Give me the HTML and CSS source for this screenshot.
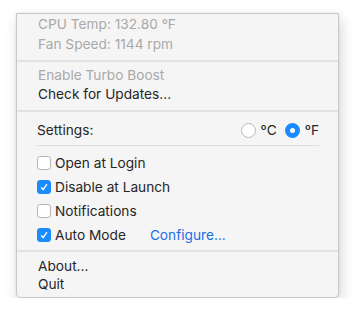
FILE: index.html
```html
<!DOCTYPE html>
<html lang="en">
<head>
  <meta charset="UTF-8" />
  <title>Fan Control Menu</title>
  <link rel="stylesheet" href="styles.css">
</head>
<body>
  <div class="menu">
    <div class="group status">
      <div class="item disabled">CPU Temp: 132.80 ºF</div>
      <div class="item disabled">Fan Speed: 1144 rpm</div>
    </div>
    <hr class="sep">
    <div class="group actions">
      <div class="item disabled">Enable Turbo Boost</div>
      <div class="item">Check for Updates...</div>
    </div>
    <hr class="sep">
    <div class="settings">
      <div class="settings-head">
        <span>Settings:</span>
        <div class="units">
          <label class="radio"><span class="dot"></span>ºC</label>
          <label class="radio on"><span class="dot"></span>ºF</label>
        </div>
      </div>
      <div class="inner-sep"></div>
      <label class="check-row"><span class="box"></span>Open at Login</label>
      <label class="check-row"><span class="box on"><svg viewBox="0 0 14 14"><path d="M3.6 7.4 L6 10 L10.4 3.6"/></svg></span>Disable at Launch</label>
      <label class="check-row"><span class="box"></span>Notifications</label>
      <div class="check-row">
        <span class="box on"><svg viewBox="0 0 14 14"><path d="M3.6 7.4 L6 10 L10.4 3.6"/></svg></span>
        <span class="auto">Auto Mode</span>
        <a class="link" href="#">Configure...</a>
      </div>
    </div>
    <hr class="sep sep-low">
    <div class="group footer">
      <div class="item">About...</div>
      <div class="item">Quit</div>
    </div>
  </div>
</body>
</html>
```

FILE: styles.css
```css
body {
  margin: 0;
  padding: 13px 0 0 16px;
  background: #fff;
  font-family: Inter, "Liberation Sans", sans-serif;
  font-size: 13.7px;
  color: #262626;
}
.menu {
  width: 321px;
  padding-bottom: 4px;
  background: #f5f5f5;
  border: 1px solid #c9c9c9;
  border-radius: 0 0 5px 5px;
  box-shadow: 2px 6px 14px rgba(0,0,0,0.16), 0 0 3px rgba(0,0,0,0.08);
}
.item {
  height: 20px;
  line-height: 20px;
  padding-left: 21px;
}
.disabled {
  color: #a9a9a9;
}
.sep {
  border: none;
  height: 2px;
  background: #e2e2e2;
  margin: 6px 0 4px;
}
.sep-low {
  margin: 3px 0 5px;
}
.actions .item {
  height: 19px;
  line-height: 19px;
}
.settings {
  padding: 4px 19px 0 20px;
}
.settings-head {
  display: flex;
  align-items: center;
  justify-content: space-between;
  height: 20px;
}
.units {
  display: flex;
  gap: 8px;
}
.radio {
  display: flex;
  align-items: center;
  gap: 5px;
}
.dot {
  width: 15px;
  height: 15px;
  border-radius: 50%;
  border: 1px solid #b9b9b9;
  background: #fff;
  box-sizing: border-box;
}
.radio.on .dot {
  border: 5px solid #1a8cff;
  background: #fff;
}
.inner-sep {
  height: 1px;
  background: #dedede;
  margin: 5px 0;
}
.check-row {
  display: flex;
  align-items: center;
  gap: 4px;
  height: 24px;
}
.box {
  width: 14px;
  height: 14px;
  box-sizing: border-box;
  border: 1px solid #b5b5b5;
  border-radius: 3px;
  background: #fff;
  display: flex;
}
.box.on {
  background: #1a8cff;
  border-color: #1a8cff;
}
.box svg {
  width: 12px;
  height: 12px;
  fill: none;
  stroke: #fff;
  stroke-width: 1.6;
}
.link {
  margin-left: 20px;
  color: #1b6fe6;
  text-decoration: none;
}
.footer .item {
  height: 18px;
  line-height: 18px;
}
```
